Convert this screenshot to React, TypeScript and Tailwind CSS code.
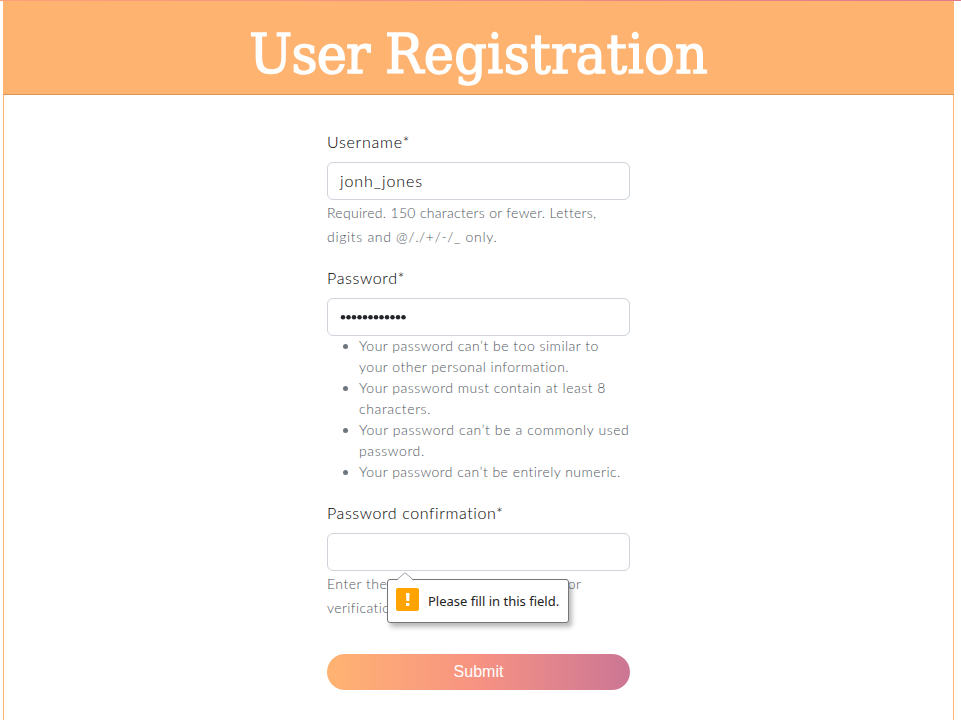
import React from "react";

const passwordRules: { text: string; spacing: string }[][] = [
  [
    { text: "Your password can’t be too similar to", spacing: "tracking-[0.5px]" },
    { text: "your other personal information.", spacing: "tracking-[0.49px]" },
  ],
  [
    { text: "Your password must contain at least 8", spacing: "tracking-[0.5px]" },
    { text: "characters.", spacing: "tracking-[0.6px]" },
  ],
  [
    { text: "Your password can’t be a commonly used", spacing: "tracking-[0.59px]" },
    { text: "password.", spacing: "tracking-[0.6px]" },
  ],
  [{ text: "Your password can’t be entirely numeric.", spacing: "tracking-[0.47px]" }],
];

function Line({ text, spacing }: { text: string; spacing: string }) {
  return (
    <span className="block whitespace-nowrap">
      <span className={spacing}>{text}</span>
    </span>
  );
}

function Label({ text, spacing }: { text: string; spacing: string }) {
  return (
    <label className="mb-2 block h-6 text-base leading-6 text-black">
      <Line text={text} spacing={spacing} />
    </label>
  );
}

const inputClass =
  "flex h-[38px] w-full items-center rounded-md border border-[#ced4da] bg-white px-3 text-base text-black";

function ValidationBubble() {
  return (
    <div className="absolute top-[46px] left-[60px] flex h-[44px] w-[182px] items-center rounded-[3px] border border-[#767676] bg-white pl-2 shadow-[3px_4px_5px_rgba(0,0,0,0.28)]">
      <svg className="absolute -top-[8px] left-[8px]" width="18" height="9" viewBox="0 0 18 9">
        <path d="M0.5 9 L9 0.7 L17.5 9Z" fill="#fff" />
        <path d="M0.5 8 L9 0.7 L17.5 8" fill="none" stroke="#a0a0a0" />
      </svg>
      <svg className="-mt-[3px] shrink-0" width="23" height="23" viewBox="0 0 23 23">
        <rect width="23" height="23" rx="2" fill="#ffa300" />
        <path d="M10 5h3.6l-.4 8h-2.8zM10 15h3.3v3H10z" fill="#fff" />
      </svg>
      <span className="ml-[9px] font-['Noto_Sans',sans-serif] text-[13px] font-normal whitespace-nowrap text-[#222]">
        Please fill in this field.
      </span>
    </div>
  );
}

export default function App() {
  return (
    <div className="h-[720px] w-[961px] overflow-hidden bg-white font-[Lato,sans-serif] font-light">
      <div className="h-px bg-linear-to-r from-[#ffa07a] to-[#de7a8d]" />
      <main className="mr-[7px] ml-[3px] h-[719px] border-x border-[#ffb371]">
        <header className="-mx-px flex h-[94px] items-center justify-center border-b border-[#dd9555] bg-[#ffb371] pt-3.5">
          <h1 className="origin-center scale-x-[0.926] font-['DejaVu_Serif',serif] text-[55px] leading-none font-normal whitespace-nowrap text-white [-webkit-text-stroke:1.5px_white]">
            <span className="tracking-[-0.9px]">User </span>
            <span className="tracking-[0.4px]">Registration</span>
          </h1>
        </header>
        <form className="mx-auto w-[303px] pt-[35px]">
          <section className="h-[136px]">
            <Label text="Username*" spacing="tracking-[0.75px]" />
            <div className={inputClass}>
              <span className="tracking-[0.92px]">jonh_jones</span>
            </div>
            <div className="mt-px text-sm leading-6 text-[#4f575e]">
              <Line text="Required. 150 characters or fewer. Letters," spacing="tracking-[0.3px]" />
              <Line text="digits and @/./+/-/_ only." spacing="tracking-[0.68px]" />
            </div>
          </section>
          <section className="h-[235px]">
            <Label text="Password*" spacing="tracking-[0.65px]" />
            <div className={inputClass}>
              <svg width="67" height="6" viewBox="0 0 67 6" fill="#212529">
                {Array.from({ length: 12 }, (_, i) => (
                  <circle key={i} cx={3 + i * 5.5} cy="3.3" r="2.25" />
                ))}
              </svg>
            </div>
            <ul className="-mt-px list-disc pl-8 text-sm leading-[21px] text-[#4f575e] marker:text-[#6c757d]">
              {passwordRules.map((lines) => (
                <li key={lines[0].text}>
                  {lines.map((line) => (
                    <Line key={line.text} {...line} />
                  ))}
                </li>
              ))}
            </ul>
          </section>
          <section className="h-[153px]">
            <Label text="Password confirmation*" spacing="tracking-[0.6px]" />
            <div className={inputClass} />
            <div className="relative -mt-[38px] pt-[39px] text-sm leading-6 text-[#4f575e]">
              <Line text="Enter the same password as before, for" spacing="tracking-[0.5px]" />
              <Line text="verification." spacing="tracking-[0.4px]" />
              <ValidationBubble />
            </div>
          </section>
          <button
            type="button"
            className="block h-9 w-full rounded-full bg-linear-to-r from-[#ffb371] via-[#f79282] to-[#cc7695] font-['Liberation_Sans',sans-serif] text-base font-normal text-white"
          >
            Submit
          </button>
        </form>
      </main>
    </div>
  );
}
